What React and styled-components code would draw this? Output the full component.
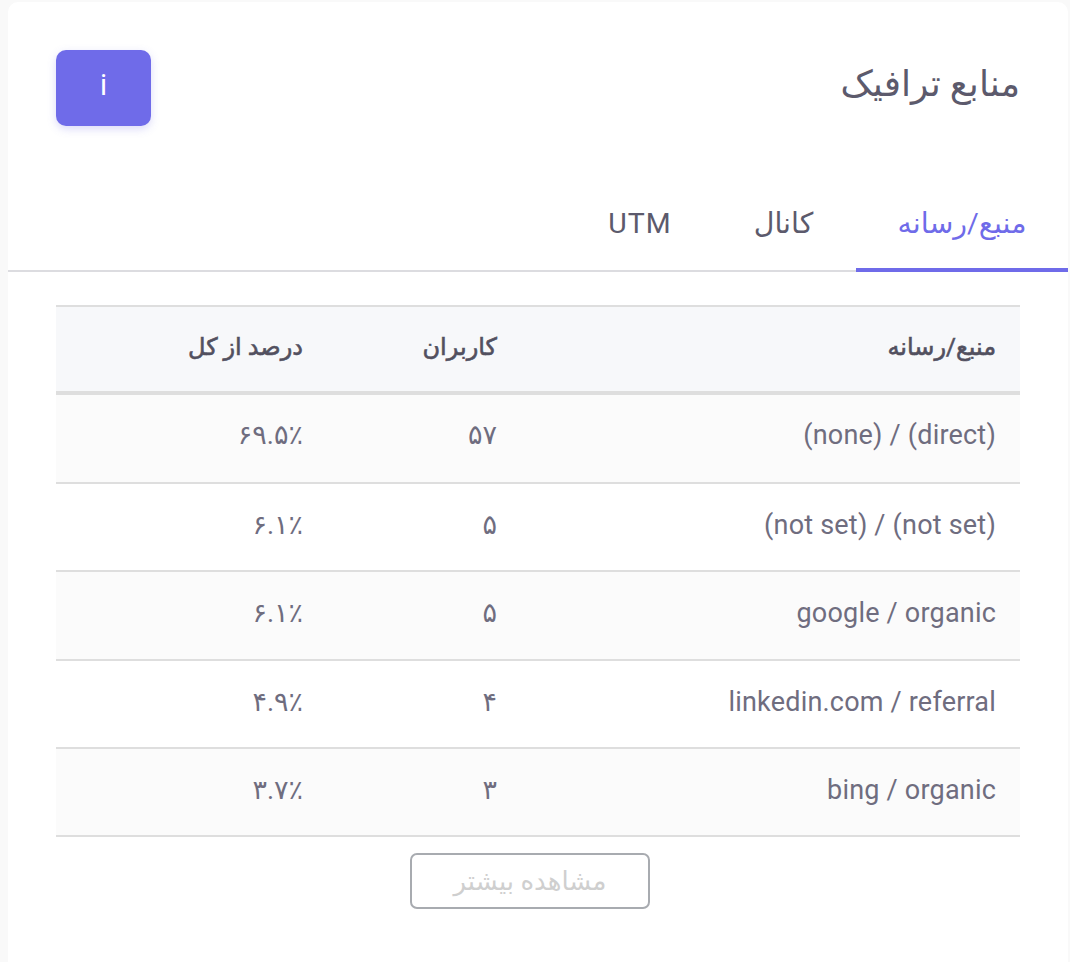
import React from "react";
import styled, { createGlobalStyle } from "styled-components";

const Global = createGlobalStyle`
  html, body { margin: 0; padding: 0; background: #f9f9f9; }
  body { font-family: Roboto, "DejaVu Sans", sans-serif; }
`;
const Card = styled.div`
  box-sizing: border-box;
  direction: rtl;
  width: 1060px;
  height: 960px;
  margin: 2px 0 0 8px;
  background: #fff;
  border-radius: 10px 10px 0 0;
`;
const Header = styled.div`
  display: flex;
  justify-content: space-between;
  align-items: center;
  padding: 48px 48px 0;
  height: 76px;
`;
const Title = styled.h2`
  margin: 0 0 8px;
  font-size: 36px;
  line-height: 44px;
  font-weight: 400;
  color: #5c5a6c;
`;
const InfoButton = styled.button`
  width: 95px;
  height: 76px;
  border: 0;
  border-radius: 10px;
  background: #6f6be9;
  color: #fff;
  font: 400 29px Roboto, sans-serif;
  padding: 0 0 6px;
  box-shadow: 0 3px 8px rgba(111, 107, 233, 0.25);
`;
const Tabs = styled.div`
  display: flex;
  margin-top: 48px;
  align-items: stretch;
  border-bottom: 2px solid #dcdce0;
  box-sizing: border-box;
  height: 98px;
`;
const Tab = styled.div`
  display: flex;
  align-items: center;
  justify-content: center;
  width: ${(p) => p.$w}px;
  box-sizing: border-box;
  font-size: 28.5px;
  padding-top: 4px;
  color: ${(p) => (p.$active ? "#6f6be9" : "#5c5a6c")};
  border-bottom: ${(p) => (p.$active ? "4px solid #6f6be9" : "0")};
  margin-bottom: ${(p) => (p.$active ? "-2px" : "0")};
  padding-bottom: ${(p) => (p.$active ? "0" : "2px")};
  letter-spacing: ${(p) => (p.$latin ? "1px" : "0")};
`;
const Content = styled.div`
  padding: 33px 48px 0;
`;
const Table = styled.table`
  width: 964px;
  border-collapse: collapse;
  table-layout: fixed;
  border-top: 2px solid #dedede;
`;
const HeadCell = styled.th`
  height: 87px;
  padding: 0 24px 4px;
  box-sizing: border-box;
  text-align: right;
  font-size: 24px;
  font-weight: 400;
  -webkit-text-stroke: 0.6px #52505f;
  color: #52505f;
  background: #f7f8fa;
  border-bottom: 4px solid #dedede;
`;
const Row = styled.tr`
  background: ${(p) => (p.$odd ? "#fbfbfb" : "#fff")};
`;
const Cell = styled.td`
  height: 88.25px;
  box-sizing: border-box;
  padding: 0 24px 4px;
  text-align: right;
  font-size: 27px;
  letter-spacing: 0.2px;
  color: #6f6d7f;
  border-bottom: 2px solid #dedede;
  tr:first-child > & {
    height: 90px;
    padding-bottom: 7px;
  }
`;
const Footer = styled.div`
  display: flex;
  justify-content: center;
  padding: 16px 0 0 0;
  margin-right: 16px;
`;
const MoreButton = styled.button`
  width: 240px;
  height: 56px;
  box-sizing: border-box;
  background: #fff;
  border: 2px solid #a8abb0;
  border-radius: 7px;
  color: #cfcfcf;
  font: 400 26px Roboto, "DejaVu Sans", sans-serif;
`;

const rows = [
  ["(direct) / (none)", "۵۷", "۶۹.۵٪"],
  ["(not set) / (not set)", "۵", "۶.۱٪"],
  ["google / organic", "۵", "۶.۱٪"],
  ["linkedin.com / referral", "۴", "۴.۹٪"],
  ["bing / organic", "۳", "۳.۷٪"],
];

export default function App() {
  return (
    <>
      <Global />
      <Card>
        <Header>
          <Title>منابع ترافیک</Title>
          <InfoButton>i</InfoButton>
        </Header>
        <Tabs>
          <Tab $w={212} $active>منبع/رسانه</Tab>
          <Tab $w={145}>کانال</Tab>
          <Tab $w={142} $latin>UTM</Tab>
        </Tabs>
        <Content>
          <Table>
            <colgroup>
              <col style={{ width: 499 }} />
              <col style={{ width: 194 }} />
              <col />
            </colgroup>
            <thead>
              <tr>
                <HeadCell>منبع/رسانه</HeadCell>
                <HeadCell>کاربران</HeadCell>
                <HeadCell>درصد از کل</HeadCell>
              </tr>
            </thead>
            <tbody>
              {rows.map((r, i) => (
                <Row key={r[0]} $odd={i % 2 === 0}>
                  {r.map((c) => (
                    <Cell key={c}>{c}</Cell>
                  ))}
                </Row>
              ))}
            </tbody>
          </Table>
          <Footer>
            <MoreButton>مشاهده بیشتر</MoreButton>
          </Footer>
        </Content>
      </Card>
    </>
  );
}
